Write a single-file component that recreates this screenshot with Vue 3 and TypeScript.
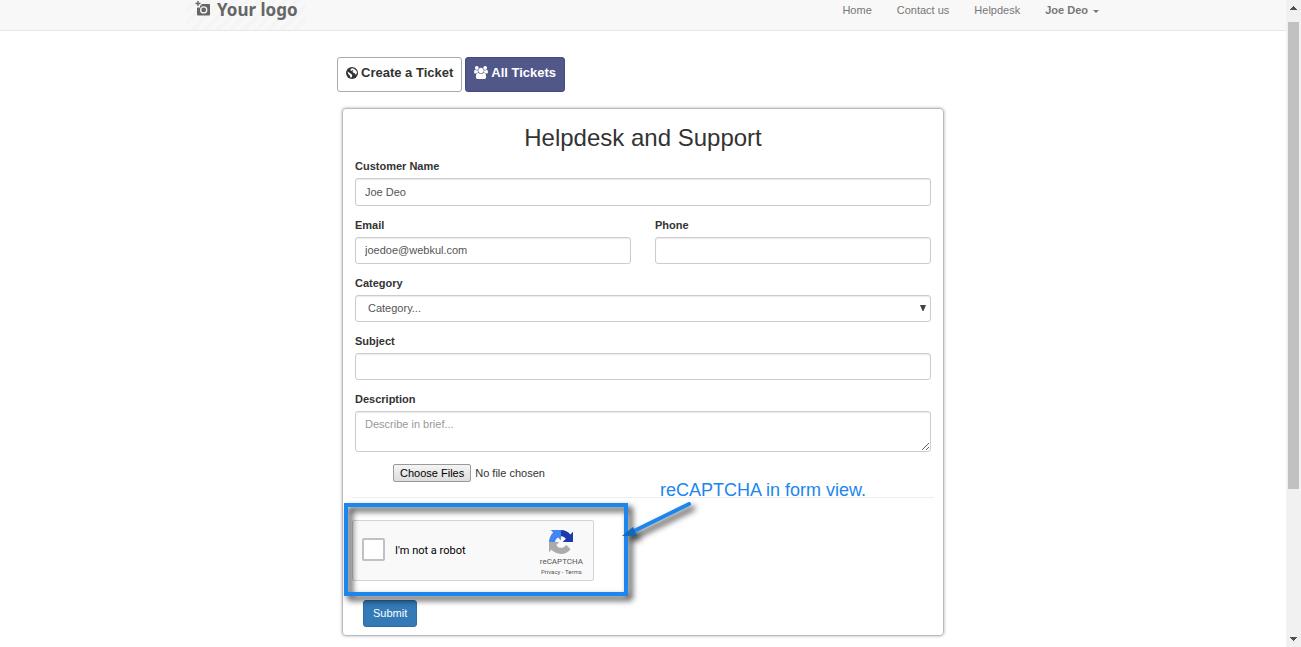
<script setup lang="ts">
import { ref } from 'vue'

interface NavLink {
  label: string
  href: string
}

const links: NavLink[] = [
  { label: 'Home', href: '#home' },
  { label: 'Contact us', href: '#contact' },
  { label: 'Helpdesk', href: '#helpdesk' },
]

const customer = ref('Joe Deo')
const email = ref('joedoe@webkul.com')
const phone = ref('')
const category = ref('')
const subject = ref('')
const description = ref('')
const human = ref(false)
</script>

<template>
  <div class="window">
    <div class="page">
      <header class="topbar">
        <div class="container">
          <a class="logo" href="#home">
            <svg class="camera" viewBox="0 0 16 16" aria-hidden="true">
              <path d="M3 0v5M0.500 2.500h5" stroke="#666" stroke-width="1.400" fill="none" />
              <path
                fill="#666"
                fill-rule="evenodd"
                d="M6.500 3H14a1 1 0 0 1 1 1v9.500a1 1 0 0 1-1 1H3a1 1 0 0 1-1-1V6.500h3V4.500h1.500zM8.700 5.200a3.700 3.700 0 1 0 0 7.400a3.700 3.700 0 1 0 0-7.400zm0 1.300a2.400 2.400 0 1 1 0 4.800a2.400 2.400 0 1 1 0-4.800z"
              />
            </svg>
            <span>Your logo</span>
          </a>
          <nav class="nav">
            <a v-for="link in links" :key="link.label" :href="link.href">{{ link.label }}</a>
            <button type="button" class="user">Joe Deo<span class="caret"></span></button>
          </nav>
        </div>
      </header>

      <main class="support">
        <div class="actions">
          <button type="button" class="tab">
            <svg class="globe" viewBox="0 0 24 24" aria-hidden="true">
              <circle cx="12" cy="12" r="12" fill="#333" />
              <path
                fill="#fff"
                d="M9.500 3.500l3.500-1 4 1.500 4 4 1 3.500-1.500 3-2 .5-1-2.500-3-1-1.500-2.500 2-2-2.500-.5-2 1.500-1.500-1.500zM3 9l3 2 4 2.500 2.500 2.500-.5 3-1.500 2.500-2-.8-.5-3.200-3.500-3.500z"
              />
            </svg>
            Create a Ticket
          </button>
          <button type="button" class="tab active">
            <svg class="users" viewBox="0 0 1920 1792" aria-hidden="true">
              <path
                fill="#fff"
                d="M593 896q-162 5-265 128h-134q-82 0-138-40.5t-56-118.5q0-353 124-353 6 0 43.5 21t97.5 42.5 119 21.5q67 0 133-23-5 37-5 66 0 139 81 256zm1071 637q0 120-73 189.5t-194 69.5h-874q-121 0-194-69.5t-73-189.5q0-53 3.5-103.5t14-109 26.5-108.5 43-97.5 62-81 85.5-53.5 111.5-20q10 0 43 21.5t73 48 107 48 135 21.5 135-21.5 107-48 73-48 43-21.5q61 0 111.5 20t85.5 53.5 62 81 43 97.5 26.5 108.5 14 109 3.5 103.5zm-1024-1277q0 106-75 181t-181 75-181-75-75-181 75-181 181-75 181 75 75 181zm704 384q0 159-112.5 271.5t-271.5 112.5-271.5-112.5-112.5-271.5 112.5-271.5 271.5-112.5 271.5 112.5 112.5 271.5zm576 225q0 78-56 118.5t-138 40.5h-134q-103-123-265-128 81-117 81-256 0-29-5-66 66 23 133 23 59 0 119-21.5t97.5-42.5 43.5-21q124 0 124 353zm-128-609q0 106-75 181t-181 75-181-75-75-181 75-181 181-75 181 75 75 181z"
              />
            </svg>
            All Tickets
          </button>
        </div>

        <form class="panel" @submit.prevent>
          <h1>Helpdesk and Support</h1>
          <div class="fields">
            <div class="field">
              <label for="customer">Customer Name</label>
              <input id="customer" v-model="customer" class="control tall" type="text" />
            </div>
            <div class="pair">
              <div class="field">
                <label for="email">Email</label>
                <input id="email" v-model="email" class="control" type="email" />
              </div>
              <div class="field">
                <label for="phone">Phone</label>
                <input id="phone" v-model="phone" class="control" type="tel" />
              </div>
            </div>
            <div class="field">
              <label for="category">Category</label>
              <div class="select-wrap">
                <select id="category" v-model="category" class="control">
                  <option value="">Category...</option>
                </select>
                <svg class="arrow" viewBox="0 0 6 6" aria-hidden="true">
                  <path d="M0 0h6L3.500 6h-1z" fill="#444" />
                </svg>
              </div>
            </div>
            <div class="field">
              <label for="subject">Subject</label>
              <input id="subject" v-model="subject" class="control" type="text" />
            </div>
            <div class="field">
              <label for="description">Description</label>
              <textarea
                id="description"
                v-model="description"
                class="control area"
                placeholder="Describe in brief..."
              ></textarea>
            </div>
            <input class="files" type="file" multiple aria-label="Attachments" />
          </div>

          <hr />

          <div class="verify">
            <div class="captcha">
              <input id="human" v-model="human" type="checkbox" />
              <label for="human">I'm not a robot</label>
              <div class="brand">
                <svg viewBox="0 0 64 64" aria-hidden="true">
                  <path fill="#1c3aa9" d="M64 31.955l-.033-1.37V4.687l-7.16 7.16C50.948 4.674 42.033.093 32.05.093c-10.4 0-19.622 4.96-25.458 12.64l11.736 11.86a15.55 15.55 0 0 1 4.754-5.334c2.05-1.6 4.952-2.906 8.968-2.906.485 0 .86.057 1.135.163 4.976.393 9.288 3.14 11.828 7.124l-8.307 8.307L64 31.953" />
                  <path fill="#4285f4" d="M31.862.094l-1.37.033H4.594l7.16 7.16C4.58 13.147 0 22.06 0 32.046c0 10.4 4.96 19.622 12.64 25.458L24.5 45.768a15.55 15.55 0 0 1-5.334-4.754c-1.6-2.05-2.906-4.952-2.906-8.968 0-.485.057-.86.163-1.135.393-4.976 3.14-9.288 7.124-11.828l8.307 8.307L31.86.095" />
                  <path fill="#ababab" d="M.001 32.045l.033 1.37v25.898l7.16-7.16c5.86 7.173 14.774 11.754 24.76 11.754 10.4 0 19.622-4.96 25.458-12.64l-11.736-11.86a15.55 15.55 0 0 1-4.754 5.334c-2.05 1.6-4.952 2.906-8.968 2.906-.485 0-.86-.057-1.135-.163-4.976-.393-9.288-3.14-11.828-7.124l8.307-8.307c-10.522.04-22.4.066-27.295-.005" />
                </svg>
                <span class="brand-name">reCAPTCHA</span>
                <span class="terms"><a href="#privacy">Privacy</a> - <a href="#terms">Terms</a></span>
              </div>
            </div>
            <svg class="callout" viewBox="0 0 360 110" aria-hidden="true">
              <rect x="2" y="7" width="280" height="89" fill="none" stroke="#1c86ee" stroke-width="4" />
              <path d="M345 6L288 34" stroke="#1c86ee" stroke-width="4" stroke-linecap="round" />
              <path d="M278 38l11-9 4 9z" fill="#1567b8" />
            </svg>
            <p class="note">reCAPTCHA in form view.</p>
          </div>

          <button type="submit" class="submit">Submit</button>
        </form>
      </main>
    </div>

    <div class="scrollbar" aria-hidden="true">
      <svg viewBox="0 0 7 4"><path d="M3 0h1v1h1v1h1v1h1v1H0V3h1V2h1V1h1z" fill="#505050" /></svg>
      <div class="track"><div class="thumb"></div></div>
      <svg viewBox="0 0 7 4"><path d="M0 0h7v1H6v1H5v1H4v1H3V3H2V2H1V1H0z" fill="#505050" /></svg>
    </div>
  </div>
</template>

<style>
body {
  margin: 0;
  background: #fff;
}
</style>

<style scoped>
*,
*::before,
*::after {
  box-sizing: border-box;
}

.window {
  display: flex;
  min-height: 100vh;
  font: 11px/16px "Liberation Sans", Arial, sans-serif;
  color: #333;
}

.page {
  flex: 1;
  min-width: 0;
}

button,
input,
select,
textarea {
  margin: 0;
  font: inherit;
  color: inherit;
}

a {
  color: inherit;
  text-decoration: none;
}

.topbar {
  background: #f8f8f8;
  border-bottom: 1px solid #e7e7e7;
}

.container {
  display: flex;
  justify-content: space-between;
  max-width: 912px;
  height: 30px;
  margin: 0 auto;
}

.logo {
  display: flex;
  gap: 6px;
  padding: 0 8px;
  font: bold 17px/20px "Noto Sans", sans-serif;
  color: #666;
  background: repeating-linear-gradient(135deg, #f8f8f8 0 5px, #f5f5f5 5px 9px);
}

.camera {
  width: 16px;
  height: 16px;
  margin-top: 1px;
}

.nav {
  display: flex;
  gap: 25px;
  line-height: 20px;
  color: #777;
}

.user {
  display: flex;
  align-items: center;
  gap: 5px;
  height: 20px;
  padding: 0;
  border: 0;
  background: none;
  font-weight: bold;
}

.caret {
  margin-top: 2px;
  border: 3px solid transparent;
  border-top-color: #777;
  border-bottom: 0;
}

.support {
  max-width: 612px;
  margin: 0 auto;
  padding: 26px 0 11px;
}

.actions {
  display: flex;
  gap: 3px;
  margin-bottom: 16px;
}

.tab {
  display: flex;
  align-items: center;
  gap: 3px;
  height: 35px;
  padding: 0 8px 4px;
  border: 1px solid #aaa;
  border-radius: 3px;
  background: #fff;
  font-size: 13px;
  font-weight: bold;
}

.tab.active {
  border-color: #444b7c;
  background: #515889;
  color: #fff;
}

.globe {
  width: 12px;
  height: 12px;
}

.users {
  width: 14px;
  height: 13px;
}

.panel {
  margin: 0 5px;
  padding: 16px 9px 8px;
  border: 1px solid #bbb;
  border-radius: 4px;
  box-shadow: 0 0 3px #aaa;
}

h1 {
  margin: 0 0 7px;
  font-size: 24px;
  font-weight: normal;
  line-height: 26px;
  text-align: center;
}

.fields {
  padding: 0 3px;
}

.field {
  display: flex;
  flex-direction: column;
  gap: 4px;
  margin-bottom: 11px;
}

.field label {
  font-weight: bold;
}

.pair {
  display: grid;
  grid-template-columns: 1fr 1fr;
  gap: 24px;
}

.control {
  width: 100%;
  height: 27px;
  padding: 0 9px 1px;
  border: 1px solid #ccc;
  border-radius: 3px;
  background: #fff;
  box-shadow: inset 0 1px 1px rgba(0, 0, 0, 0.08);
  color: #555;
}

.control.tall {
  height: 28px;
  padding-bottom: 0;
}

.select-wrap {
  position: relative;
  display: flex;
}

select.control {
  appearance: none;
  padding: 0 12px 1px;
}

.arrow {
  position: absolute;
  top: 10px;
  right: 5px;
  width: 6px;
  height: 6px;
  pointer-events: none;
}

.control.area {
  display: block;
  height: 41px;
  padding: 4px 9px;
  resize: vertical;
}

.area::placeholder {
  color: #999;
}

.files {
  display: block;
  height: 18px;
  margin: 12px 0 0 38px;
  line-height: 15px;
}

.files::file-selector-button {
  height: 18px;
  margin: 0 4px 0 0;
  padding: 0 6px;
  border: 1px solid #999;
  border-radius: 2px;
  background: linear-gradient(#f4f4f4, #ddd);
  font: inherit;
  color: #000;
}

hr {
  margin: 15px 0 22px;
  border: 0;
  border-top: 1px solid #eee;
}

.verify {
  position: relative;
}

.captcha {
  display: flex;
  align-items: center;
  width: 242px;
  height: 61px;
  padding: 0 10px 0 9px;
  border: 1px solid #d3d3d3;
  border-radius: 2px;
  background: #f9f9f9;
  font-family: Roboto, sans-serif;
  color: #000;
}

.captcha input {
  appearance: none;
  width: 23px;
  height: 23px;
  margin: 0 10px 2px 0;
  border: 2px solid #c1c1c1;
  border-radius: 2px;
  background: #fff;
}

.captcha input:checked {
  background: #4285f4;
}

.brand {
  display: flex;
  flex-direction: column;
  align-items: center;
  margin-left: auto;
  color: #555;
}

.brand svg {
  width: 24px;
  height: 24px;
  margin-top: 4px;
}

.brand-name {
  font-size: 8px;
  line-height: 12px;
  margin-top: 2px;
}

.terms {
  font-size: 6px;
  line-height: 8px;
}

.callout {
  position: absolute;
  left: -8px;
  top: -22px;
  width: 360px;
  height: 110px;
  overflow: visible;
  pointer-events: none;
  filter: drop-shadow(4px 4px 3px rgba(0, 0, 0, 0.85));
}

.note {
  position: absolute;
  left: 308px;
  top: -40px;
  margin: 0;
  font-size: 18px;
  line-height: 20px;
  white-space: nowrap;
  color: #1c86ee;
}

.submit {
  display: block;
  height: 27px;
  margin: 19px 0 0 11px;
  padding: 0 9px 1px;
  border: 1px solid #2e6da4;
  border-radius: 3px;
  background: #337ab7;
  color: #fff;
}

.scrollbar {
  display: flex;
  flex-direction: column;
  align-items: center;
  width: 15px;
  padding: 6px 0;
  background: #f1f1f1;
}

.scrollbar svg {
  width: 7px;
  height: 4px;
}

.track {
  flex: 1;
  width: 11px;
  padding: 12px 0 9px;
}

.thumb {
  height: 77%;
  background: #c1c1c1;
}
</style>
